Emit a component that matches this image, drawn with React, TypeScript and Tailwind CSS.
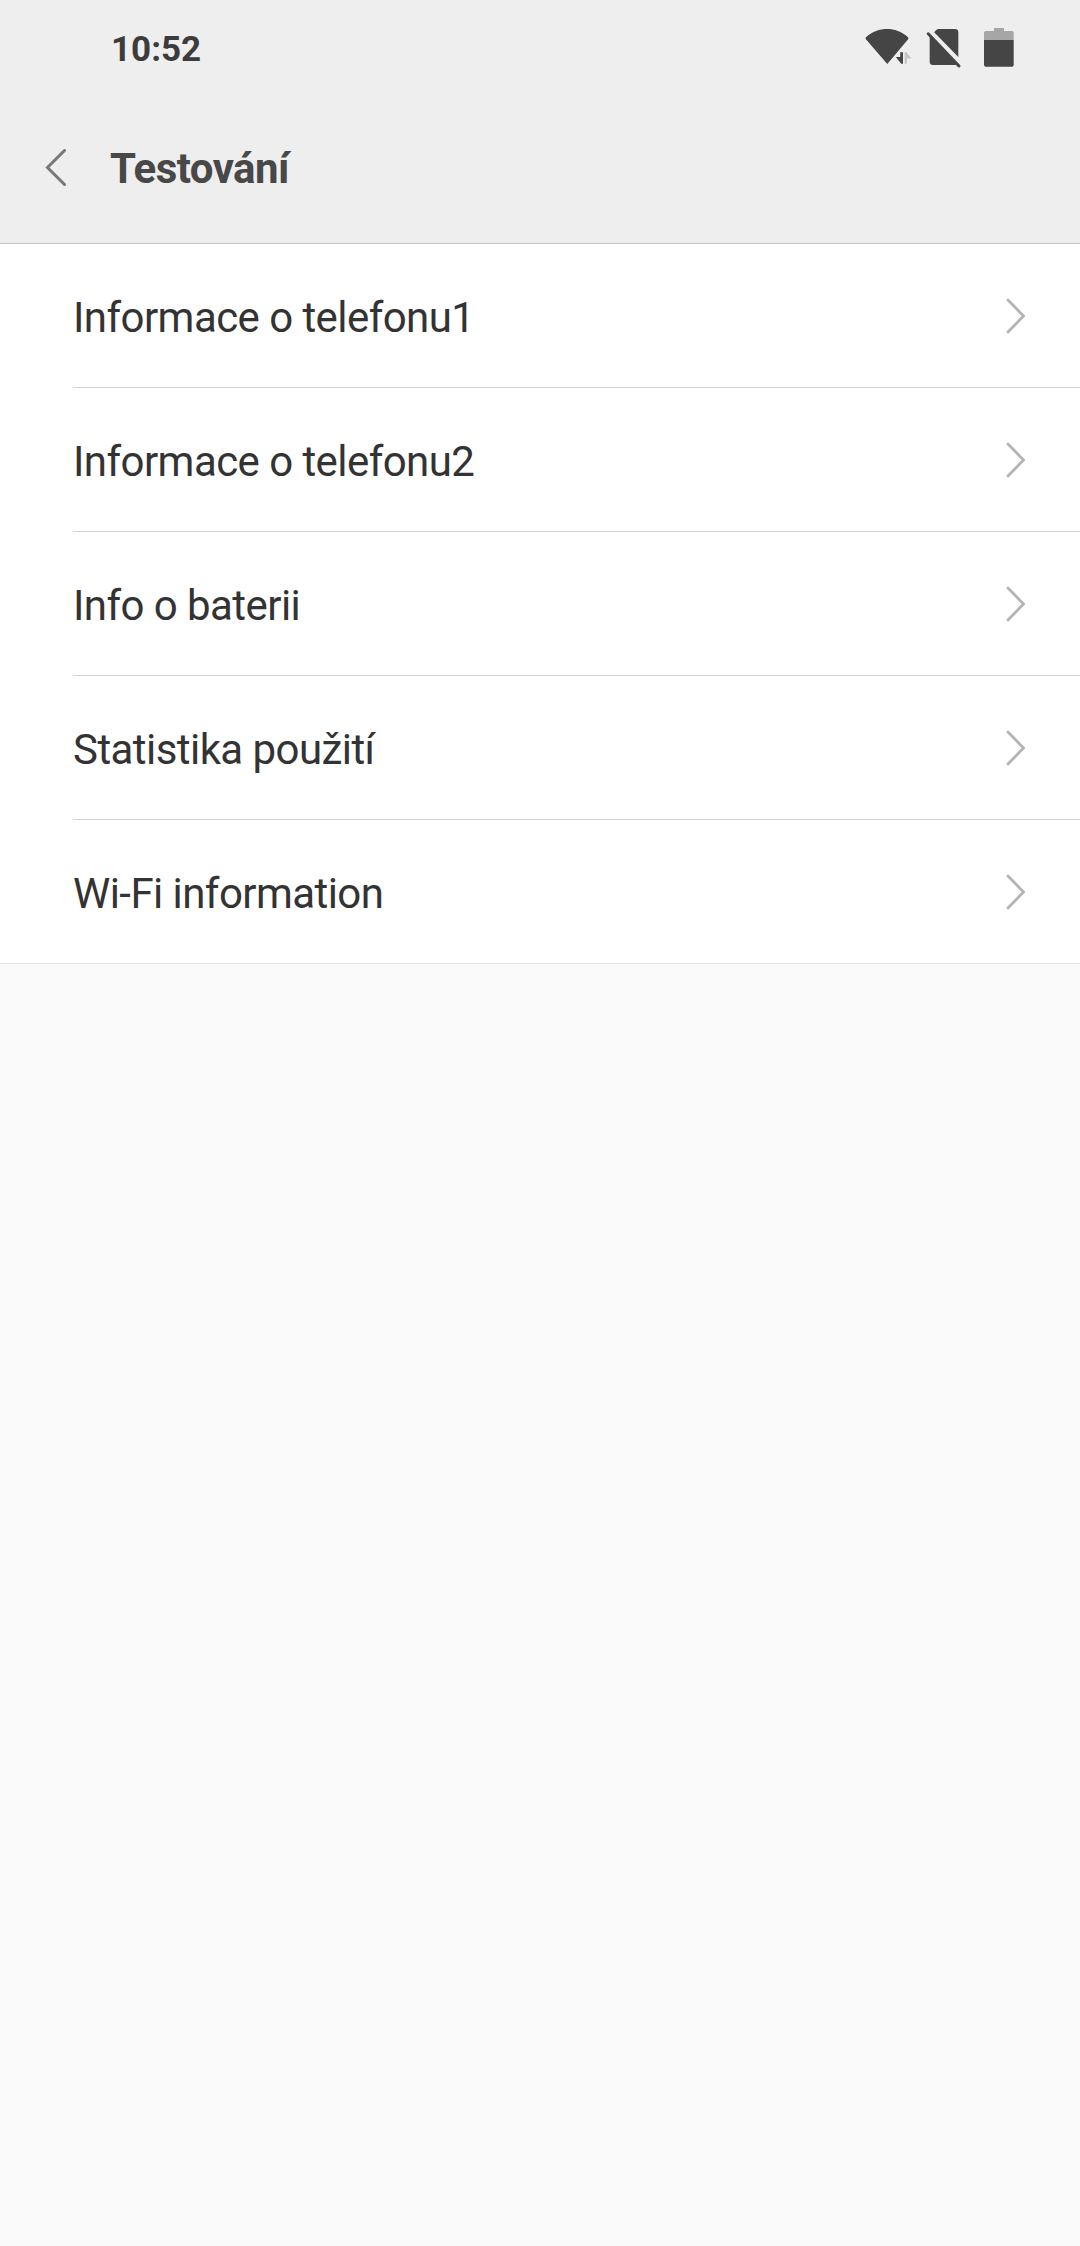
import React from 'react';

type MenuItem = {
  id: string;
  title: string;
};

const items: MenuItem[] = [
  { id: 'phone1', title: 'Informace o telefonu1' },
  { id: 'phone2', title: 'Informace o telefonu2' },
  { id: 'battery', title: 'Info o baterii' },
  { id: 'usage', title: 'Statistika použití' },
  { id: 'wifi', title: 'Wi-Fi information' },
];

function WifiIcon() {
  return (
    <svg width="48" height="40" viewBox="0 0 48 40" className="mr-4">
      <path
        d="M22.3 36 L0.9 11.2 Q0 10 1.2 9 C7.5 3.5 14.5 1 22 1 C29.5 1 36.5 3.5 42.8 9 Q44 10 43.1 11.2 Z"
        fill="#454545"
      />
      <path d="M38 20 L28.5 30 L35 37.5 L38 37.5 Z" fill="#eee" />
      <path d="M35.2 24.3 H38 V35.7 H36.2 L30.8 29 H35.2 Z" fill="#454545" />
      <path d="M39.6 24.3 H41.4 L46.5 30.5 H41.9 V35.7 H39.6 Z" fill="#c6c6c6" />
    </svg>
  );
}

function NoSimIcon() {
  return (
    <svg width="34" height="40" viewBox="0 0 34 40" className="mr-[21px] overflow-visible">
      <path
        d="M5.2 4.2 L7 2.2 Q8.2 1 10 1 H26 Q29.3 1 29.3 4.3 V29 Z"
        fill="#454545"
      />
      <path d="M0.7 8 L28 37 H4 Q0.7 37 0.7 33.7 Z" fill="#454545" />
      <path d="M-0.8 5.8 L30 38" stroke="#454545" strokeWidth="3" strokeLinecap="round" />
    </svg>
  );
}

function BatteryIcon() {
  return (
    <svg width="30" height="40" viewBox="0 0 30 40">
      <path d="M10 0 H20 V3 H28 Q29.7 3 29.7 4.7 V12 H0 V4.7 Q0 3 1.7 3 H10 Z" fill="#a6a6a6" />
      <path d="M0 12 H29.7 V36.2 Q29.7 38.8 27.1 38.8 H2.6 Q0 38.8 0 36.2 Z" fill="#454545" />
    </svg>
  );
}

function StatusBar() {
  return (
    <div className="flex h-24 items-center justify-between pr-[66px] pl-[111px]">
      <span className="pt-[3px] text-[35px] leading-none font-bold text-[#3c3c3c]">10:52</span>
      <div className="flex items-center">
        <WifiIcon />
        <NoSimIcon />
        <BatteryIcon />
      </div>
    </div>
  );
}

function Header() {
  return (
    <header className="h-61 border-b border-[#c4c4c4] bg-[#eee]">
      <StatusBar />
      <div className="flex h-[143px] items-center pl-[45px]">
        <svg width="22" height="38" viewBox="0 0 22 38" fill="none" className="shrink-0">
          <path d="M19.5 1.5 L2.5 18.5 L19.5 35.5" stroke="#777" strokeWidth="3" strokeLinecap="round" />
        </svg>
        <h1 className="ml-[43px] pt-[3px] text-[42px] leading-none font-bold tracking-[-0.55px] text-[#484848]">
          Testování
        </h1>
      </div>
    </header>
  );
}

export default function App() {
  return (
    <div className="min-h-[2246px] w-[1080px] bg-[#fafafa] font-['Roboto',sans-serif]">
      <Header />
      <ul className="border-b border-[#e4e4e4] bg-white">
        {items.map((item) => (
          <li key={item.id} className="ml-[73px] h-36 border-b border-[#d4d4d4] last:h-[143px] last:border-b-0">
            <a className="flex h-[143px] items-center justify-between pr-[54px]">
              <span className="pt-1 text-[42px] leading-none tracking-[-0.56px] text-[#333]">{item.title}</span>
              <svg width="20" height="36" viewBox="0 0 20 36" fill="none">
                <path d="M2 2 L17.5 18 L2 34" stroke="#b4b4b4" strokeWidth="2.8" strokeLinecap="round" />
              </svg>
            </a>
          </li>
        ))}
      </ul>
    </div>
  );
}
